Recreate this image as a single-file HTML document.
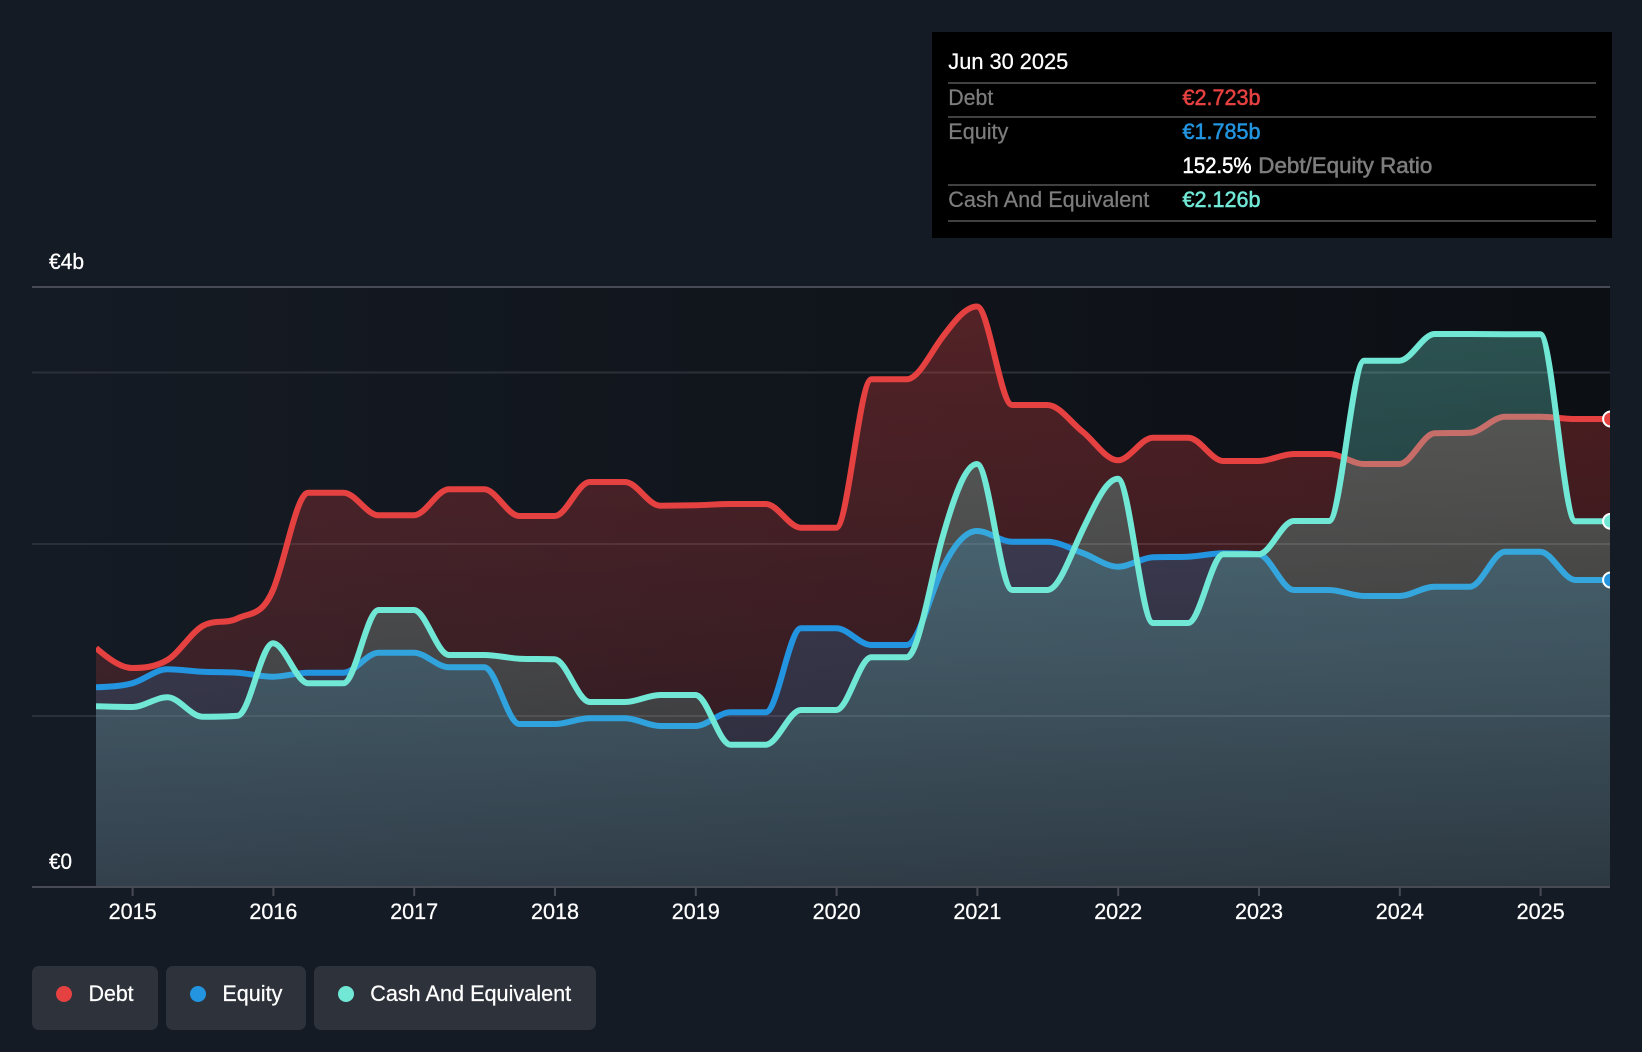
<!DOCTYPE html>
<html><head><meta charset="utf-8"><style>
html,body{margin:0;padding:0;background:#151b24;width:1642px;height:1052px;overflow:hidden}
svg{display:block}
text{font-family:"Liberation Sans",sans-serif;font-size:22px;fill:#fff;stroke:#fff;stroke-width:.25px}
text.g{fill:#7d7d7d;stroke:#7d7d7d}
.m{stroke-width:.55px;paint-order:stroke}
</style></head><body>
<svg width="1642" height="1052" viewBox="0 0 1642 1052" xmlns="http://www.w3.org/2000/svg">
<defs>
<linearGradient id="bg" x1="32" x2="1610" y1="0" y2="0" gradientUnits="userSpaceOnUse"><stop offset="0" stop-color="#151b24"/><stop offset="1" stop-color="#0c0f14"/></linearGradient>
<linearGradient id="fr" x1="0" x2="0" y1="287" y2="887" gradientUnits="userSpaceOnUse"><stop offset="0" stop-color="#e64141" stop-opacity=".32"/><stop offset="1" stop-color="#e64141" stop-opacity=".11"/></linearGradient>
<linearGradient id="fb" x1="0" x2="0" y1="287" y2="887" gradientUnits="userSpaceOnUse"><stop offset="0" stop-color="#2394df" stop-opacity=".32"/><stop offset="1" stop-color="#2394df" stop-opacity=".11"/></linearGradient>
<linearGradient id="ft" x1="0" x2="0" y1="287" y2="887" gradientUnits="userSpaceOnUse"><stop offset="0" stop-color="#71e7d6" stop-opacity=".32"/><stop offset="1" stop-color="#71e7d6" stop-opacity=".11"/></linearGradient>
<clipPath id="c"><rect x="96" y="280" width="1514" height="607"/></clipPath>
</defs>
<rect width="1642" height="1052" fill="#151b24"/>
<rect x="32" y="287" width="1578" height="600" fill="url(#bg)"/>
<g fill="#2b2f37">
<rect x="32" y="371.5" width="1578" height="2"/>
<rect x="32" y="543" width="1578" height="2"/>
<rect x="32" y="715" width="1578" height="2"/>
</g>
<g clip-path="url(#c)">
<path id="ar" fill="url(#fr)"/><path id="lr" fill="none" stroke="#e64141" stroke-width="6"/>
<path id="ab" fill="url(#fb)"/><path id="lb" fill="none" stroke="#2394df" stroke-width="6"/>
<path id="at" fill="url(#ft)"/><path id="lt" fill="none" stroke="#71e7d6" stroke-width="6"/>
</g>
<g fill="#484b54">
<rect x="32" y="286" width="1578" height="2"/>
<rect x="32" y="886" width="1578" height="2"/>
<rect x="131.6" y="886" width="2" height="10"/><rect x="272.4" y="886" width="2" height="10"/><rect x="413.2" y="886" width="2" height="10"/><rect x="554" y="886" width="2" height="10"/><rect x="694.8" y="886" width="2" height="10"/><rect x="835.6" y="886" width="2" height="10"/><rect x="976.4" y="886" width="2" height="10"/><rect x="1117.2" y="886" width="2" height="10"/><rect x="1258" y="886" width="2" height="10"/><rect x="1398.8" y="886" width="2" height="10"/><rect x="1539.6" y="886" width="2" height="10"/>
</g>
<svg x="0" y="0" width="1610" height="1052">
<circle cx="1610.6" cy="419" r="7.5" fill="#e64141" stroke="#fff" stroke-width="2"/>
<circle cx="1610.6" cy="521.3" r="7.5" fill="#71e7d6" stroke="#fff" stroke-width="2"/>
<circle cx="1610.6" cy="580" r="7.5" fill="#2394df" stroke="#fff" stroke-width="2"/>
</svg>
<text x="49" y="269" textLength="35" lengthAdjust="spacingAndGlyphs">€4b</text>
<text x="49" y="869" textLength="23" lengthAdjust="spacingAndGlyphs">€0</text>
<g>
<text x="108.6" y="919" textLength="48" lengthAdjust="spacingAndGlyphs">2015</text><text x="249.4" y="919" textLength="48" lengthAdjust="spacingAndGlyphs">2016</text><text x="390.2" y="919" textLength="48" lengthAdjust="spacingAndGlyphs">2017</text><text x="531" y="919" textLength="48" lengthAdjust="spacingAndGlyphs">2018</text><text x="671.8" y="919" textLength="48" lengthAdjust="spacingAndGlyphs">2019</text><text x="812.6" y="919" textLength="48" lengthAdjust="spacingAndGlyphs">2020</text><text x="953.4" y="919" textLength="48" lengthAdjust="spacingAndGlyphs">2021</text><text x="1094.2" y="919" textLength="48" lengthAdjust="spacingAndGlyphs">2022</text><text x="1235" y="919" textLength="48" lengthAdjust="spacingAndGlyphs">2023</text><text x="1375.8" y="919" textLength="48" lengthAdjust="spacingAndGlyphs">2024</text><text x="1516.6" y="919" textLength="48" lengthAdjust="spacingAndGlyphs">2025</text>
</g>
<rect x="932" y="32" width="680" height="206" fill="#000"/>
<g fill="#404040">
<rect x="948" y="82" width="648" height="2"/>
<rect x="948" y="116" width="648" height="2"/>
<rect x="948" y="184" width="648" height="2"/>
<rect x="948" y="220" width="648" height="2"/>
</g>
<text x="948.3" y="69" textLength="120" lengthAdjust="spacingAndGlyphs">Jun 30 2025</text>
<text class="g" x="948.3" y="105" textLength="45" lengthAdjust="spacingAndGlyphs">Debt</text>
<text class="m" x="1182.5" y="105" textLength="78" lengthAdjust="spacingAndGlyphs" style="fill:#e64141;stroke:#e64141">€2.723b</text>
<text class="g" x="948.3" y="139" textLength="60" lengthAdjust="spacingAndGlyphs">Equity</text>
<text class="m" x="1182.5" y="139" textLength="78" lengthAdjust="spacingAndGlyphs" style="fill:#2394df;stroke:#2394df">€1.785b</text>
<text class="m" x="1182.5" y="173" textLength="69" lengthAdjust="spacingAndGlyphs" style="stroke:#fff">152.5%</text>
<text class="m g" x="1258.3" y="173" textLength="174" lengthAdjust="spacingAndGlyphs" style="stroke:#7d7d7d">Debt/Equity Ratio</text>
<text class="g" x="948.3" y="207" textLength="201" lengthAdjust="spacingAndGlyphs">Cash And Equivalent</text>
<text class="m" x="1182.5" y="207" textLength="78" lengthAdjust="spacingAndGlyphs" style="fill:#71e7d6;stroke:#71e7d6">€2.126b</text>
<g fill="#2e323a">
<rect x="32" y="966" width="126" height="64" rx="7"/>
<rect x="166" y="966" width="140" height="64" rx="7"/>
<rect x="314" y="966" width="282" height="64" rx="7"/>
</g>
<circle cx="64" cy="994" r="8" fill="#e64141"/>
<circle cx="198" cy="994" r="8" fill="#2394df"/>
<circle cx="346" cy="994" r="8" fill="#71e7d6"/>
<text x="88.6" y="1001" textLength="45" lengthAdjust="spacingAndGlyphs">Debt</text>
<text x="222.4" y="1001" textLength="60" lengthAdjust="spacingAndGlyphs">Equity</text>
<text x="370.2" y="1001" textLength="201" lengthAdjust="spacingAndGlyphs">Cash And Equivalent</text>
</svg>
<script>
var R=[648,668,660,626,618.3,590,492.7,492.7,515.3,515.3,489.3,489.3,516,516,482,482,505.7,505.3,504,504,527.7,527.7,379.3,379.3,338,306.5,405,405,431.7,460.3,437.7,437.7,461,461,454,454,464,464,433.3,432.7,416.7,416.7,419,419];
var B=[687.3,683.3,669.3,671.7,672.7,676.7,672.7,672.7,652.7,652.7,667.3,667.3,724,724,718.3,718.3,726,726,712.3,712.3,628.3,628.3,645,645,570,531,541.7,541.7,553,566.7,557.3,556.7,553.3,554.3,590,590,596,596,586.7,586.7,551.7,551.7,580,580];
var T=[706.3,707,697.3,716.7,715.7,643.3,683.3,683.3,610,610,655,655,658.7,659.3,702,702,695,695,744.7,744.7,710,710,657.3,657.3,540,464,590,590,530,478.8,623,623,554.3,554.3,521,521,360.7,360.7,334,334,334.3,334.3,521.3,521.3];
function mono(ys){
  var h=35.2,n=ys.length,x=function(i){return i?97+h*i:96},s=[],t=[],i;
  for(i=0;i<n-1;i++)s[i]=(ys[i+1]-ys[i])/h;
  for(i=1;i<n-1;i++){
    var a=s[i-1],b=s[i];
    if(a*b<=0){t[i]=0;continue;}
    var m=Math.min(Math.abs(a),Math.abs(b)),f=m>0.8?1.3:1,v=Math.min(Math.abs(a+b)/2*f,3*m);
    t[i]=(a<0?-1:1)*v;
  }
  t[0]=(3*s[0]-t[1])/2;t[n-1]=(3*s[n-2]-t[n-2])/2;
  var d="M"+x(0)+" "+ys[0];
  for(i=0;i<n-1;i++){
    var dx=h/3;
    d+="C"+(x(i)+dx).toFixed(2)+" "+(ys[i]+dx*t[i]).toFixed(2)+" "+(x(i+1)-dx).toFixed(2)+" "+(ys[i+1]-dx*t[i+1]).toFixed(2)+" "+x(i+1).toFixed(2)+" "+ys[i+1];
  }
  return d;
}
[["r",R],["b",B],["t",T]].forEach(function(p){
  var d=mono(p[1]);
  document.getElementById("l"+p[0]).setAttribute("d",d);
  document.getElementById("a"+p[0]).setAttribute("d",d+"L"+(97+35.2*43)+" 887L96 887Z");
});
</script>
</body></html>
